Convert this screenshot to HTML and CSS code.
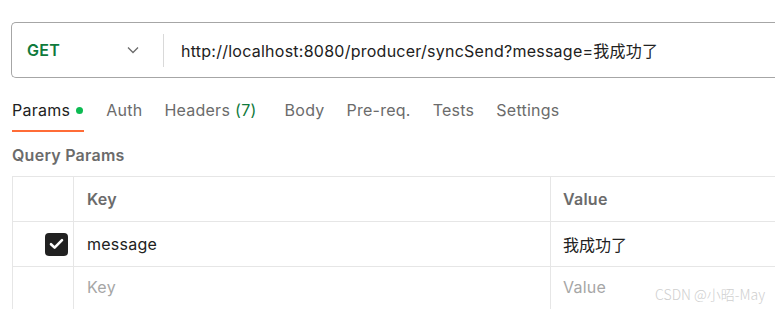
FILE: index.html
```html
<!DOCTYPE html>
<html>
<head>
  <meta charset="UTF-8">
  <title>Params</title>
  <link rel="stylesheet" href="styles.css">
</head>
<body>
  <div class="request-bar">
    <div class="method">
      <span class="method-name">GET</span>
      <svg class="chevron" width="12" height="8" viewBox="0 0 12 8"><path d="M1 1.5l5 5 5-5" fill="none" stroke="#6b6b6b" stroke-width="1.3"/></svg>
    </div>
    <div class="url">http://localhost:8080/producer/syncSend?message=我成功了</div>
  </div>

  <nav class="tabs">
    <div class="tab active">Params <span class="dot"></span></div>
    <div class="tab">Auth</div>
    <div class="tab wide">Headers <span class="count">(7)</span></div>
    <div class="tab">Body</div>
    <div class="tab">Pre-req.</div>
    <div class="tab">Tests</div>
    <div class="tab">Settings</div>
  </nav>

  <div class="section-title">Query Params</div>

  <div class="params">
    <div class="row head">
      <div class="cell check"></div>
      <div class="cell key">Key</div>
      <div class="cell value">Value</div>
    </div>
    <div class="row">
      <div class="cell check">
        <span class="checkbox">
          <svg width="15" height="12" viewBox="0 0 15 12"><path d="M2 6.2l3.6 3.4 7.4-7.4" fill="none" stroke="#fff" stroke-width="2.6" stroke-linecap="round" stroke-linejoin="round"/></svg>
        </span>
      </div>
      <div class="cell key">message</div>
      <div class="cell value cjk">我成功了</div>
    </div>
    <div class="row empty">
      <div class="cell check"></div>
      <div class="cell key">Key</div>
      <div class="cell value">Value</div>
    </div>
  </div>

  <div class="watermark">CSDN @小昭-May</div>
</body>
</html>
```

FILE: styles.css
```css
body {
  margin: 0;
  padding: 22px 0 0 11px;
  background-color: #ffffff;
  font-family: Inter, "Noto Sans CJK SC", sans-serif;
  font-size: 16px;
  letter-spacing: 0.25px;
  color: #212121;
  overflow: hidden;
  height: 309px;
  box-sizing: border-box;
  position: relative;
}

.request-bar {
  display: flex;
  align-items: center;
  height: 56px;
  border: 1px solid #a6a6a6;
  border-right: none;
  border-radius: 5px 0 0 5px;
  box-sizing: border-box;
}

.method {
  display: flex;
  align-items: center;
  justify-content: space-between;
  width: 152px;
  height: 33px;
  padding: 0 24px 0 15px;
  box-sizing: border-box;
  border-right: 1px solid #d9d9d9;
}

.method-name {
  color: #0f7a3c;
  font-weight: 600;
}

.url {
  padding-left: 17px;
  white-space: nowrap;
}

.tabs {
  display: flex;
  margin-top: 22px;
  padding-left: 1px;
}

.tab {
  line-height: 20px;
  color: #6b6b6b;
  padding-bottom: 10px;
  margin-right: 22px;
  display: flex;
  align-items: center;
  border-bottom: 2px solid transparent;
}

.tab.active {
  color: #212121;
  padding-right: 1px;
  border-bottom-color: #ff6c37;
}

.tab.wide {
  margin-right: 28px;
}

.dot {
  display: inline-block;
  width: 7px;
  height: 7px;
  border-radius: 50%;
  background-color: #0cbb52;
  margin-left: 6px;
}

.count {
  color: #0f7a3c;
  margin-left: 5px;
}

.section-title {
  margin-top: 13px;
  padding-left: 1px;
  line-height: 20px;
  font-weight: 600;
  color: #6b6b6b;
}

.params {
  margin-top: 11px;
  margin-left: 1px;
  border-top: 1px solid #e6e6e6;
  border-left: 1px solid #e6e6e6;
}

.row {
  display: flex;
  height: 45px;
  box-sizing: border-box;
  border-bottom: 1px solid #e6e6e6;
}

.cell {
  display: flex;
  align-items: center;
  box-sizing: border-box;
}

.check {
  width: 61px;
  justify-content: flex-end;
  padding-right: 5px;
  border-right: 1px solid #e6e6e6;
}

.key {
  width: 477px;
  padding-left: 13px;
  border-right: 1px solid #e6e6e6;
}

.value {
  padding-left: 12px;
  flex: 1;
}

.head .cell {
  font-weight: 600;
  color: #6b6b6b;
}

.empty .cell {
  padding-bottom: 4px;
}

.empty .key,
.empty .value {
  color: #a6a6a6;
}

.cjk {
  font-family: "Noto Sans CJK SC", sans-serif;
  letter-spacing: 0;
}

.checkbox {
  display: flex;
  align-items: center;
  justify-content: center;
  width: 23px;
  height: 23px;
  border-radius: 4px;
  background-color: #212121;
}

.watermark {
  position: absolute;
  right: 10px;
  bottom: 5px;
  font-size: 14px;
  letter-spacing: 0;
  color: #cfcfcf;
  font-family: "Noto Sans CJK SC", sans-serif;
  font-weight: 300;
}
```
